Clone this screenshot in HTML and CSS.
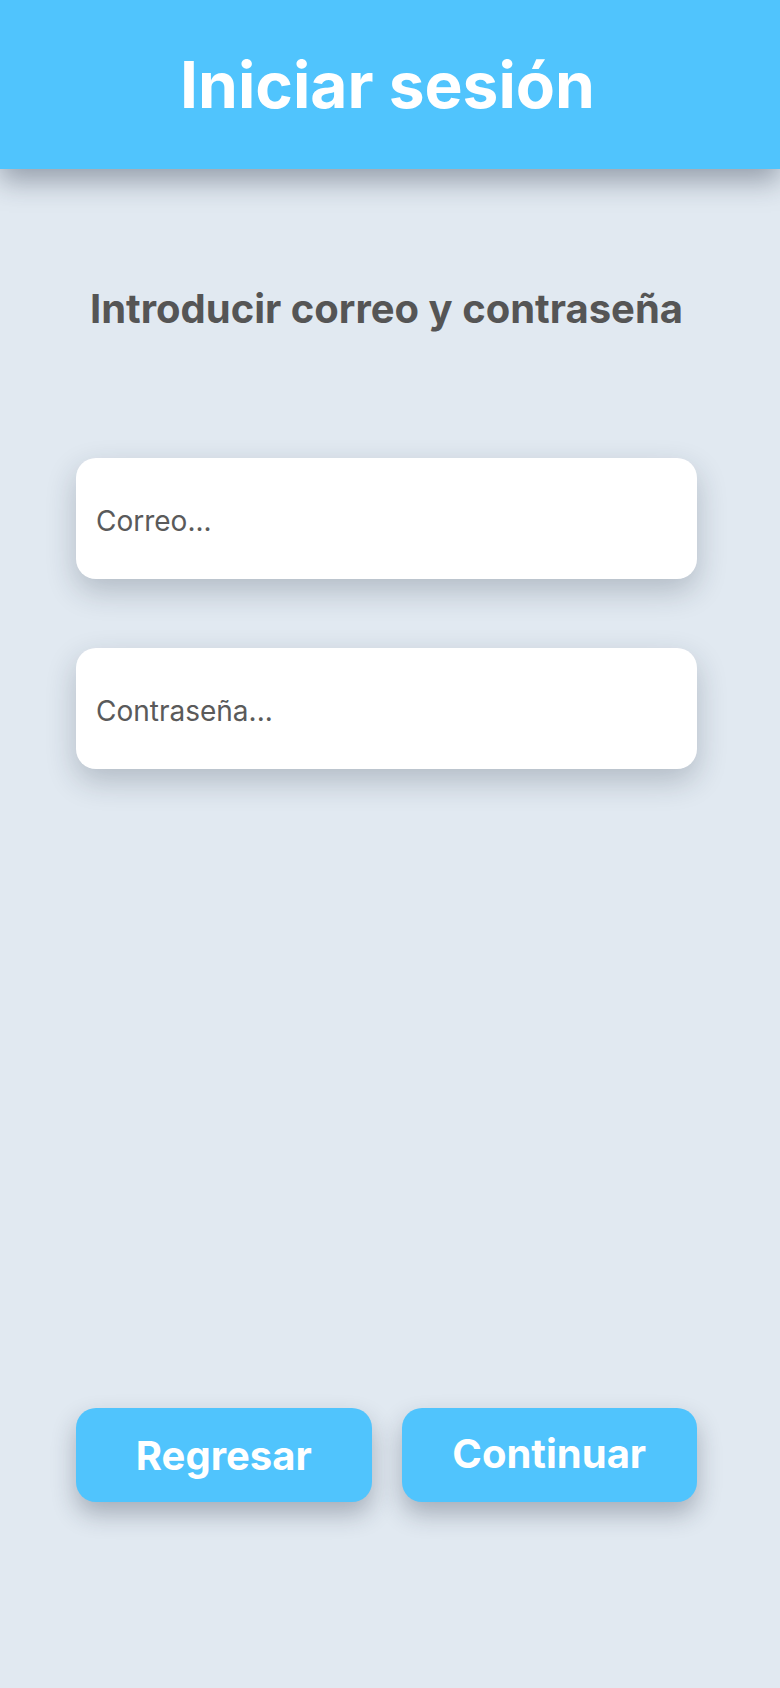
FILE: index.html
```html
<!DOCTYPE html>
<html lang="es">
<head>
<meta charset="utf-8">
<title>Iniciar sesión</title>
<link rel="stylesheet" href="styles.css">
</head>
<body>
<header class="top-bar">
  <h1 class="top-title">Iniciar sesión</h1>
</header>
<main class="login">
  <h2 class="login-subtitle">Introducir correo y contraseña</h2>
  <form class="login-form">
    <input class="field" type="email" placeholder="Correo...">
    <input class="field" type="password" placeholder="Contraseña...">
  </form>
  <div class="actions">
    <button class="btn" type="button">Regresar</button>
    <button class="btn btn-up" type="button">Continuar</button>
  </div>
</main>
</body>
</html>
```

FILE: styles.css
```css
* { box-sizing: border-box; }

html, body {
  margin: 0;
  padding: 0;
}

body {
  background: #e1e9f1;
  font-family: Inter, "Noto Sans", sans-serif;
  min-height: 1688px;
}

.top-bar {
  height: 169px;
  background: #50c4fd;
  display: flex;
  align-items: center;
  justify-content: center;
  padding-right: 5px;
  box-shadow: 0 12px 26px rgba(30, 40, 60, 0.38);
  position: relative;
  z-index: 1;
}

.top-title {
  margin: 0;
  font-size: 64px;
  font-weight: 700;
  color: #ffffff;
  line-height: 1;
}

.login {
  width: 621px;
  margin-left: 76px;
  display: flex;
  flex-direction: column;
}

.login-subtitle {
  margin: 116px 0 0;
  font-size: 40px;
  line-height: 48px;
  font-weight: 700;
  color: #555555;
  text-align: center;
}

.login-form {
  margin-top: 125px;
  display: flex;
  flex-direction: column;
  gap: 69px;
}

.field {
  height: 121px;
  width: 100%;
  border: none;
  outline: none;
  border-radius: 20px;
  background: #ffffff;
  padding: 4px 20px 0;
  font-family: Inter, "Noto Sans", sans-serif;
  font-size: 28px;
  font-weight: 400;
  color: #5a5a5a;
  box-shadow: 0 12px 30px rgba(30, 40, 60, 0.24);
}

.field::placeholder {
  color: #5a5a5a;
  opacity: 1;
}

.actions {
  margin-top: 639px;
  display: flex;
  gap: 30px;
}

.btn {
  flex: 1;
  height: 94px;
  border: none;
  border-radius: 20px;
  background: #50c4fd;
  color: #ffffff;
  font-family: Inter, "Noto Sans", sans-serif;
  font-size: 40px;
  font-weight: 700;
  padding: 0;
  box-shadow: 0 12px 24px rgba(30, 40, 60, 0.3);
}

.btn-up {
  padding-bottom: 3px;
}
```
